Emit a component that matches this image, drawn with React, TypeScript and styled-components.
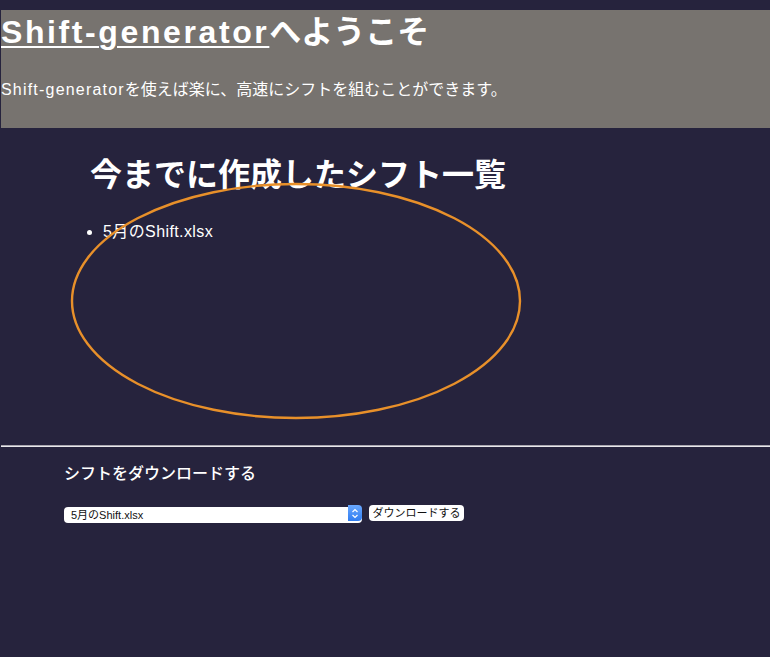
import styled, { createGlobalStyle } from "styled-components";

const GlobalStyle = createGlobalStyle`
  html, body {
    margin: 0;
    padding: 0;
    background: #26233d;
  }
  body {
    font-family: "Liberation Sans", "Noto Sans CJK JP", sans-serif;
    color: #ffffff;
  }
`;

const files = ["5月のShift.xlsx"];

export default function App() {
  return (
    <>
      <GlobalStyle />
      <Page>
        <Hero>
          <Title>
            <a href="#">Shift-generator</a>へようこそ
          </Title>
          <Lead>
            <Latin spacing={1.2}>Shift-generator</Latin>
            を使えば楽に、高速にシフトを組むことができます。
          </Lead>
        </Hero>

        <History>
          <HistoryTitle>今までに作成したシフト一覧</HistoryTitle>
          <FileList>
            {files.map((f) => (
              <li key={f}>{f}</li>
            ))}
          </FileList>
          <Circle width="460" height="250" viewBox="0 0 460 250">
            <ellipse
              cx="230"
              cy="125"
              rx="224"
              ry="117"
              fill="none"
              stroke="#e8902a"
              strokeWidth="2.4"
            />
          </Circle>
        </History>

        <Divider />

        <Download>
          <DownloadTitle>シフトをダウンロードする</DownloadTitle>
          <Controls>
            <SelectBox>
              <FileSelect defaultValue={files[0]}>
                {files.map((f) => (
                  <option key={f}>{f}</option>
                ))}
              </FileSelect>
              <Stepper>
                <svg width="8" height="11" viewBox="0 0 8 11">
                  <path
                    d="M1.5 4 L4 1.5 L6.5 4 M1.5 7 L4 9.5 L6.5 7"
                    fill="none"
                    stroke="#fff"
                    strokeWidth="1.2"
                  />
                </svg>
              </Stepper>
            </SelectBox>
            <DownloadButton>ダウンロードする</DownloadButton>
          </Controls>
        </Download>
      </Page>
    </>
  );
}

const Page = styled.div`
  min-height: 657px;
  padding-top: 10px;
  box-sizing: border-box;
`;

const Hero = styled.header`
  margin-left: 1px;
  background: #77736f;
  padding: 0 0 28px;
`;

const Title = styled.h1`
  margin: 0;
  font-size: 32px;
  line-height: 44px;
  font-weight: 700;

  a {
    color: #ffffff;
    letter-spacing: 2.6px;
    text-decoration: underline;
    text-decoration-thickness: 2px;
    text-underline-offset: 3px;
  }
`;

const Latin = styled.span<{ spacing: number }>`
  letter-spacing: ${(p) => p.spacing}px;
`;

const Lead = styled.p`
  margin: 26px 0 0;
  font-size: 16px;
  line-height: 20px;
`;

const History = styled.section`
  position: relative;
  padding: 28px 0 0 90px;
  height: 288px;
  box-sizing: border-box;
`;

const HistoryTitle = styled.h2`
  margin: 0;
  font-size: 32px;
  line-height: 38px;
  font-weight: 700;
`;

const FileList = styled.ul`
  margin: 28px 0 0;
  padding-left: 13px;
  font-size: 16px;
  line-height: 20px;
  letter-spacing: 0.4px;
`;

const Circle = styled.svg`
  position: absolute;
  left: 66px;
  top: 48px;
  pointer-events: none;
`;

const Divider = styled.hr`
  margin: 29px 0 0 1px;
  border: none;
  border-top: 1px solid #a9a7b0;
  border-bottom: 1px solid #e8e8ec;
`;

const Download = styled.section`
  padding: 17px 0 0 64px;
`;

const DownloadTitle = styled.h3`
  margin: 0;
  font-size: 16px;
  line-height: 20px;
  font-weight: 500;
`;

const Controls = styled.div`
  display: flex;
  align-items: center;
  gap: 7px;
  margin-top: 21px;
`;

const SelectBox = styled.div`
  position: relative;
  width: 298px;
  height: 16px;
`;

const FileSelect = styled.select`
  appearance: none;
  width: 100%;
  height: 16px;
  margin: 0;
  border: none;
  border-radius: 4px;
  background: #ffffff;
  padding: 0 0 0 7px;
  font-family: "Liberation Sans", "Noto Sans CJK JP", sans-serif;
  font-size: 11px;
  color: #111;
  line-height: 16px;
`;

const Stepper = styled.span`
  position: absolute;
  right: 0;
  top: 0;
  width: 14px;
  height: 16px;
  border-radius: 0 4px 4px 0;
  background: linear-gradient(#6aa8ff, #2f7cf0);
  display: flex;
  align-items: center;
  justify-content: center;
`;

const DownloadButton = styled.button`
  height: 16px;
  width: 95px;
  margin: 0;
  padding: 0;
  border: none;
  border-radius: 4px;
  background: #ffffff;
  font-family: "Liberation Sans", "Noto Sans CJK JP", sans-serif;
  font-size: 11px;
  color: #111;
  line-height: 16px;
`;
